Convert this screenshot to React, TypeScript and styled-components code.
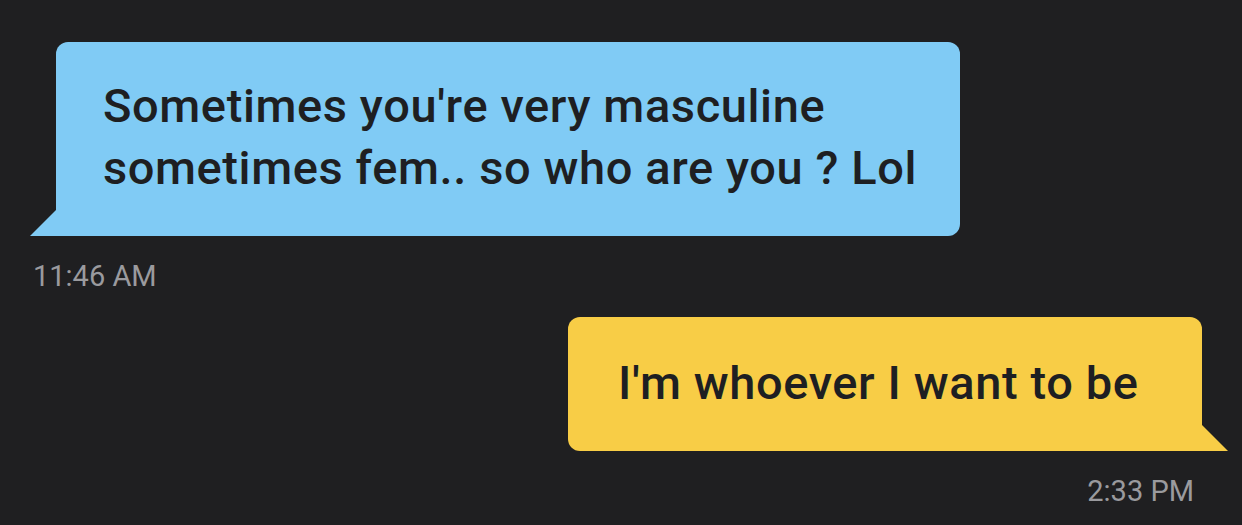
import React from "react";
import styled, { createGlobalStyle } from "styled-components";

const GlobalStyle = createGlobalStyle`
  html, body {
    margin: 0;
    padding: 0;
    background: #1f1f21;
  }
  body {
    font-family: Roboto, "Liberation Sans", sans-serif;
  }
`;

type Side = "in" | "out";

const messages: { side: Side; text: string; time: string }[] = [
  {
    side: "in",
    text: "Sometimes you're very masculine sometimes fem.. so who are you ? Lol",
    time: "11:46 AM",
  },
  { side: "out", text: "I'm whoever I want to be", time: "2:33 PM" },
];

const App: React.FC = () => {
  return (
    <>
      <GlobalStyle />
      <Thread>
        {messages.map((m) => (
          <Group key={m.time} side={m.side}>
            <Bubble side={m.side}>{m.text}</Bubble>
            <Time side={m.side}>{m.time}</Time>
          </Group>
        ))}
      </Thread>
    </>
  );
};

const Thread = styled.div`
  width: 1242px;
  height: 525px;
  box-sizing: border-box;
  padding-top: 42px;
  display: flex;
  flex-direction: column;
  gap: 24px;
  overflow: hidden;
`;

const Group = styled.div<{ side: Side }>`
  display: flex;
  flex-direction: column;
  align-items: ${(p) => (p.side === "in" ? "flex-start" : "flex-end")};
  padding: ${(p) => (p.side === "in" ? "0 0 0 56px" : "0 40px 0 0")};
`;

const Bubble = styled.div<{ side: Side }>`
  position: relative;
  box-sizing: border-box;
  width: ${(p) => (p.side === "in" ? "904px" : "634px")};
  padding: ${(p) => (p.side === "in" ? "33px 40px 37px 47px" : "35px 40px 37px 50px")};
  background: ${(p) => (p.side === "in" ? "#80cbf5" : "#f8cd46")};
  color: #1e1f22;
  font-family: Roboto, "Liberation Sans", sans-serif;
  font-weight: 500;
  font-size: 47px;
  line-height: 62px;
  letter-spacing: 0.6px;
  border-radius: ${(p) => (p.side === "in" ? "12px 12px 12px 0" : "12px 12px 0 12px")};

  &::before {
    content: "";
    position: absolute;
    bottom: 0;
    width: 27px;
    height: 27px;
    background: inherit;
    ${(p) =>
      p.side === "in"
        ? "left: -26px; clip-path: polygon(100% 0, 100% 100%, 0 100%);"
        : "right: -26px; clip-path: polygon(0 0, 100% 100%, 0 100%);"}
  }
`;

const Time = styled.div<{ side: Side }>`
  margin-top: 23px;
  ${(p) => (p.side === "in" ? "margin-left: -23px;" : "margin-right: 8px;")}
  color: #9a9a9e;
  font-family: Roboto, "Liberation Sans", sans-serif;
  font-size: 29px;
  line-height: 34px;
`;

export default App;
